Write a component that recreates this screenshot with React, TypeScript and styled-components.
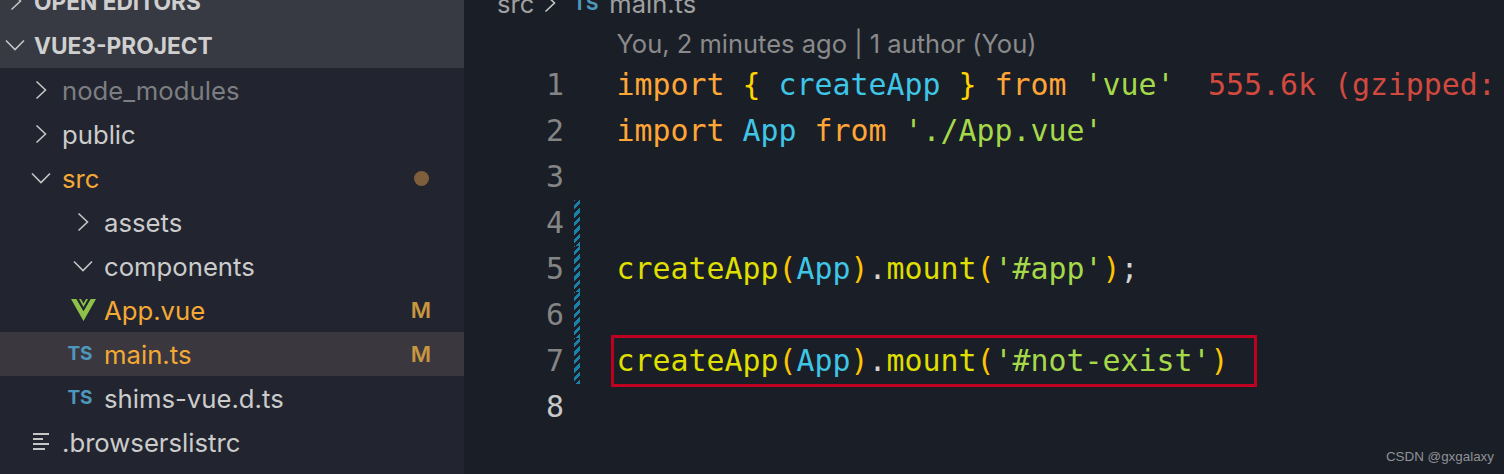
import React from 'react';
import styled, { createGlobalStyle } from 'styled-components';

const GlobalStyle = createGlobalStyle`
	html, body {
		margin: 0;
		height: 100%;
		overflow: hidden;
		background: #1a1e27;
	}
`;

const Page = styled.div`
	position: relative;
	display: flex;
	width: 1504px;
	height: 474px;
	overflow: hidden;
`;
const Sidebar = styled.aside`
	width: 464px;
	flex: none;
	margin-top: -20px;
	background: #22252f;
	font-family: Inter, 'Noto Sans', sans-serif;
`;
const SectionHeader = styled.div`
	display: flex;
	align-items: center;
	height: 42px;
	padding: 0 0 2px 5px;
	background: #373a43;
	color: #cfcfcf;
	font-size: 22.7px;
	font-weight: 700;
	svg {
		margin-right: 9px;
	}
`;
const ClosedHeader = styled(SectionHeader)`
	svg {
		margin-left: 5px;
		margin-right: 12px;
	}
`;
const Row = styled.div<{ $level: number; $selected?: boolean }>`
	display: flex;
	align-items: center;
	height: 44px;
	padding: 0 33px 0 ${(p) => 28 + p.$level * 42}px;
	background: ${(p) => (p.$selected ? '#3a383e' : 'transparent')};
`;
const IconSlot = styled.span`
	display: flex;
	align-items: center;
	justify-content: center;
	width: 26px;
	margin-right: 8px;
	flex: none;
`;
const TsBadge = styled.span`
	font-size: 19px;
	font-weight: 700;
	color: #4d97bd;
	margin-left: -6px;
	margin-top: -2px;
`;
const FileName = styled.span<{ $tone?: 'muted' | 'modified' }>`
	flex: 1;
	margin-top: 0;
	font-size: 25.7px;
	color: ${(p) =>
		p.$tone === 'muted' ? '#7d7e82' : p.$tone === 'modified' ? '#f5a935' : '#cccccc'};
`;
const StatusLetter = styled.span`
	font-size: 22px;
	font-weight: 600;
	color: #c8963e;
`;
const StatusDot = styled.span`
	width: 15px;
	height: 15px;
	margin-right: 2px;
	border-radius: 50%;
	background: #7f5f3b;
`;

const Editor = styled.main`
	flex: 1;
	min-width: 0;
	margin-top: -20px;
	background: #1a1e27;
`;
const Breadcrumb = styled.div`
	display: flex;
	align-items: center;
	height: 46px;
	padding: 0 0 0 33px;
	margin-bottom: -4px;
	font-family: Inter, 'Noto Sans', sans-serif;
	font-size: 25.5px;
	color: #a0a0a0;
	svg {
		margin: 0 17px 0 10px;
	}
`;
const BreadcrumbBadge = styled(TsBadge)`
	margin: 0 11px 0 0;
`;
const CodeLens = styled.div`
	height: 40px;
	line-height: 44px;
	padding-left: 152.5px;
	font-family: Inter, 'Noto Sans', sans-serif;
	font-size: 25.5px;
	color: #8a8a8a;
`;
const Line = styled.div`
	position: relative;
	display: grid;
	grid-template-columns: 100px 16px 1fr;
	height: 46px;
	line-height: 46px;
	font-family: 'DejaVu Sans Mono', 'Liberation Mono', monospace;
	font-size: 29.9px;
`;
const LineNumber = styled.span<{ $active?: boolean }>`
	text-align: right;
	color: ${(p) => (p.$active ? '#c8c8c8' : '#858585')};
`;
const DirtyMark = styled.span<{ $changed?: boolean }>`
	margin-left: 10px;
	width: 6px;
	background: ${(p) =>
		p.$changed
			? 'repeating-linear-gradient(-45deg, #1b81a8 0 3px, transparent 3px 6px)'
			: 'none'};
`;
const Code = styled.code`
	padding-left: 36.5px;
	font: inherit;
	white-space: pre;
`;

const tokenColors = {
	keyword: '#ffa636',
	brace: '#ffd400',
	name: '#3fc5e6',
	string: '#a5d94a',
	call: '#dfdf00',
	paren: '#ffc400',
	plain: '#d4d4d4',
	error: '#d2493f',
};
const Token = styled.span<{ $kind: keyof typeof tokenColors }>`
	color: ${(p) => tokenColors[p.$kind]};
`;
const SizeHint = styled(Token)`
	margin-left: 33.5px;
`;
const RedBox = styled.div`
	position: absolute;
	left: 147px;
	top: -3px;
	width: 646px;
	height: 52px;
	box-sizing: border-box;
	border: 3px solid #c00020;
`;
const Watermark = styled.div`
	position: absolute;
	right: 10px;
	bottom: 9px;
	font-family: 'Liberation Sans', Arial, sans-serif;
	font-size: 13.4px;
	line-height: 16px;
	color: #8f9296;
`;

const ChevronRight: React.FC = () => (
	<svg width="12" height="20" viewBox="0 0 12 20" fill="none" stroke="#c5c5c5" strokeWidth="1.6">
		<path d="M1.5 1.5 L10.5 10 L1.5 18.5" />
	</svg>
);
const ChevronDown: React.FC = () => (
	<svg width="20" height="12" viewBox="0 0 20 12" fill="none" stroke="#c5c5c5" strokeWidth="1.6">
		<path d="M1 1.5 L10 10.5 L19 1.5" />
	</svg>
);
const VueIcon: React.FC = () => (
	<svg width="25" height="22" viewBox="0 0 25 22">
		<path d="M0 0 H5.5 L12.5 12 L19.5 0 H25 L12.5 22 Z" fill="#8dc149" />
		<path d="M5.5 0 H9.5 L12.5 5.5 L15.5 0 H19.5 L12.5 12 Z" fill="#22252f" />
		<path d="M8 0 H10 L12.5 4.5 L15 0 H17 L12.5 8 Z" fill="#8dc149" />
	</svg>
);
const ListIcon: React.FC = () => (
	<svg width="18" height="18" viewBox="0 0 18 18" fill="#c5c5c5">
		<rect x="1" y="0" width="16" height="2" />
		<rect x="1" y="5" width="10" height="2" />
		<rect x="1" y="10" width="16" height="2" />
		<rect x="1" y="15" width="12" height="2" />
	</svg>
);

const App: React.FC = () => {
	return (
		<Page>
			<GlobalStyle />
			<Sidebar>
				<ClosedHeader>
					<ChevronRight />
					OPEN EDITORS
				</ClosedHeader>
				<SectionHeader>
					<ChevronDown />
					VUE3-PROJECT
				</SectionHeader>
				<Row $level={0}>
					<IconSlot>
						<ChevronRight />
					</IconSlot>
					<FileName $tone="muted">node_modules</FileName>
				</Row>
				<Row $level={0}>
					<IconSlot>
						<ChevronRight />
					</IconSlot>
					<FileName>public</FileName>
				</Row>
				<Row $level={0}>
					<IconSlot>
						<ChevronDown />
					</IconSlot>
					<FileName $tone="modified">src</FileName>
					<StatusDot />
				</Row>
				<Row $level={1}>
					<IconSlot>
						<ChevronRight />
					</IconSlot>
					<FileName>assets</FileName>
				</Row>
				<Row $level={1}>
					<IconSlot>
						<ChevronDown />
					</IconSlot>
					<FileName>components</FileName>
				</Row>
				<Row $level={1}>
					<IconSlot>
						<VueIcon />
					</IconSlot>
					<FileName $tone="modified">App.vue</FileName>
					<StatusLetter>M</StatusLetter>
				</Row>
				<Row $level={1} $selected>
					<IconSlot>
						<TsBadge>TS</TsBadge>
					</IconSlot>
					<FileName $tone="modified">main.ts</FileName>
					<StatusLetter>M</StatusLetter>
				</Row>
				<Row $level={1}>
					<IconSlot>
						<TsBadge>TS</TsBadge>
					</IconSlot>
					<FileName>shims-vue.d.ts</FileName>
				</Row>
				<Row $level={0}>
					<IconSlot>
						<ListIcon />
					</IconSlot>
					<FileName>.browserslistrc</FileName>
				</Row>
			</Sidebar>
			<Editor>
				<Breadcrumb>
					src
					<ChevronRight />
					<BreadcrumbBadge>TS</BreadcrumbBadge>
					main.ts
				</Breadcrumb>
				<CodeLens>You, 2 minutes ago | 1 author (You)</CodeLens>
				<Line>
					<LineNumber>1</LineNumber>
					<DirtyMark />
					<Code>
						<Token $kind="keyword">import</Token> <Token $kind="brace">{'{'}</Token>{' '}
						<Token $kind="name">createApp</Token> <Token $kind="brace">{'}'}</Token>{' '}
						<Token $kind="keyword">from</Token> <Token $kind="string">'vue'</Token>
						<SizeHint $kind="error">555.6k (gzipped: 121.4k)</SizeHint>
					</Code>
				</Line>
				<Line>
					<LineNumber>2</LineNumber>
					<DirtyMark />
					<Code>
						<Token $kind="keyword">import</Token> <Token $kind="name">App</Token>{' '}
						<Token $kind="keyword">from</Token> <Token $kind="string">'./App.vue'</Token>
					</Code>
				</Line>
				<Line>
					<LineNumber>3</LineNumber>
					<DirtyMark />
					<Code />
				</Line>
				<Line>
					<LineNumber>4</LineNumber>
					<DirtyMark $changed />
					<Code />
				</Line>
				<Line>
					<LineNumber>5</LineNumber>
					<DirtyMark $changed />
					<Code>
						<Token $kind="call">createApp</Token>
						<Token $kind="paren">(</Token>
						<Token $kind="name">App</Token>
						<Token $kind="paren">)</Token>
						<Token $kind="plain">.</Token>
						<Token $kind="call">mount</Token>
						<Token $kind="paren">(</Token>
						<Token $kind="string">'#app'</Token>
						<Token $kind="paren">)</Token>
						<Token $kind="plain">;</Token>
					</Code>
				</Line>
				<Line>
					<LineNumber>6</LineNumber>
					<DirtyMark $changed />
					<Code />
				</Line>
				<Line>
					<LineNumber>7</LineNumber>
					<DirtyMark $changed />
					<Code>
						<Token $kind="call">createApp</Token>
						<Token $kind="paren">(</Token>
						<Token $kind="name">App</Token>
						<Token $kind="paren">)</Token>
						<Token $kind="plain">.</Token>
						<Token $kind="call">mount</Token>
						<Token $kind="paren">(</Token>
						<Token $kind="string">'#not-exist'</Token>
						<Token $kind="paren">)</Token>
					</Code>
					<RedBox />
				</Line>
				<Line>
					<LineNumber $active>8</LineNumber>
					<DirtyMark />
					<Code />
				</Line>
			</Editor>
			<Watermark>CSDN @gxgalaxy</Watermark>
		</Page>
	);
};

export default App;
